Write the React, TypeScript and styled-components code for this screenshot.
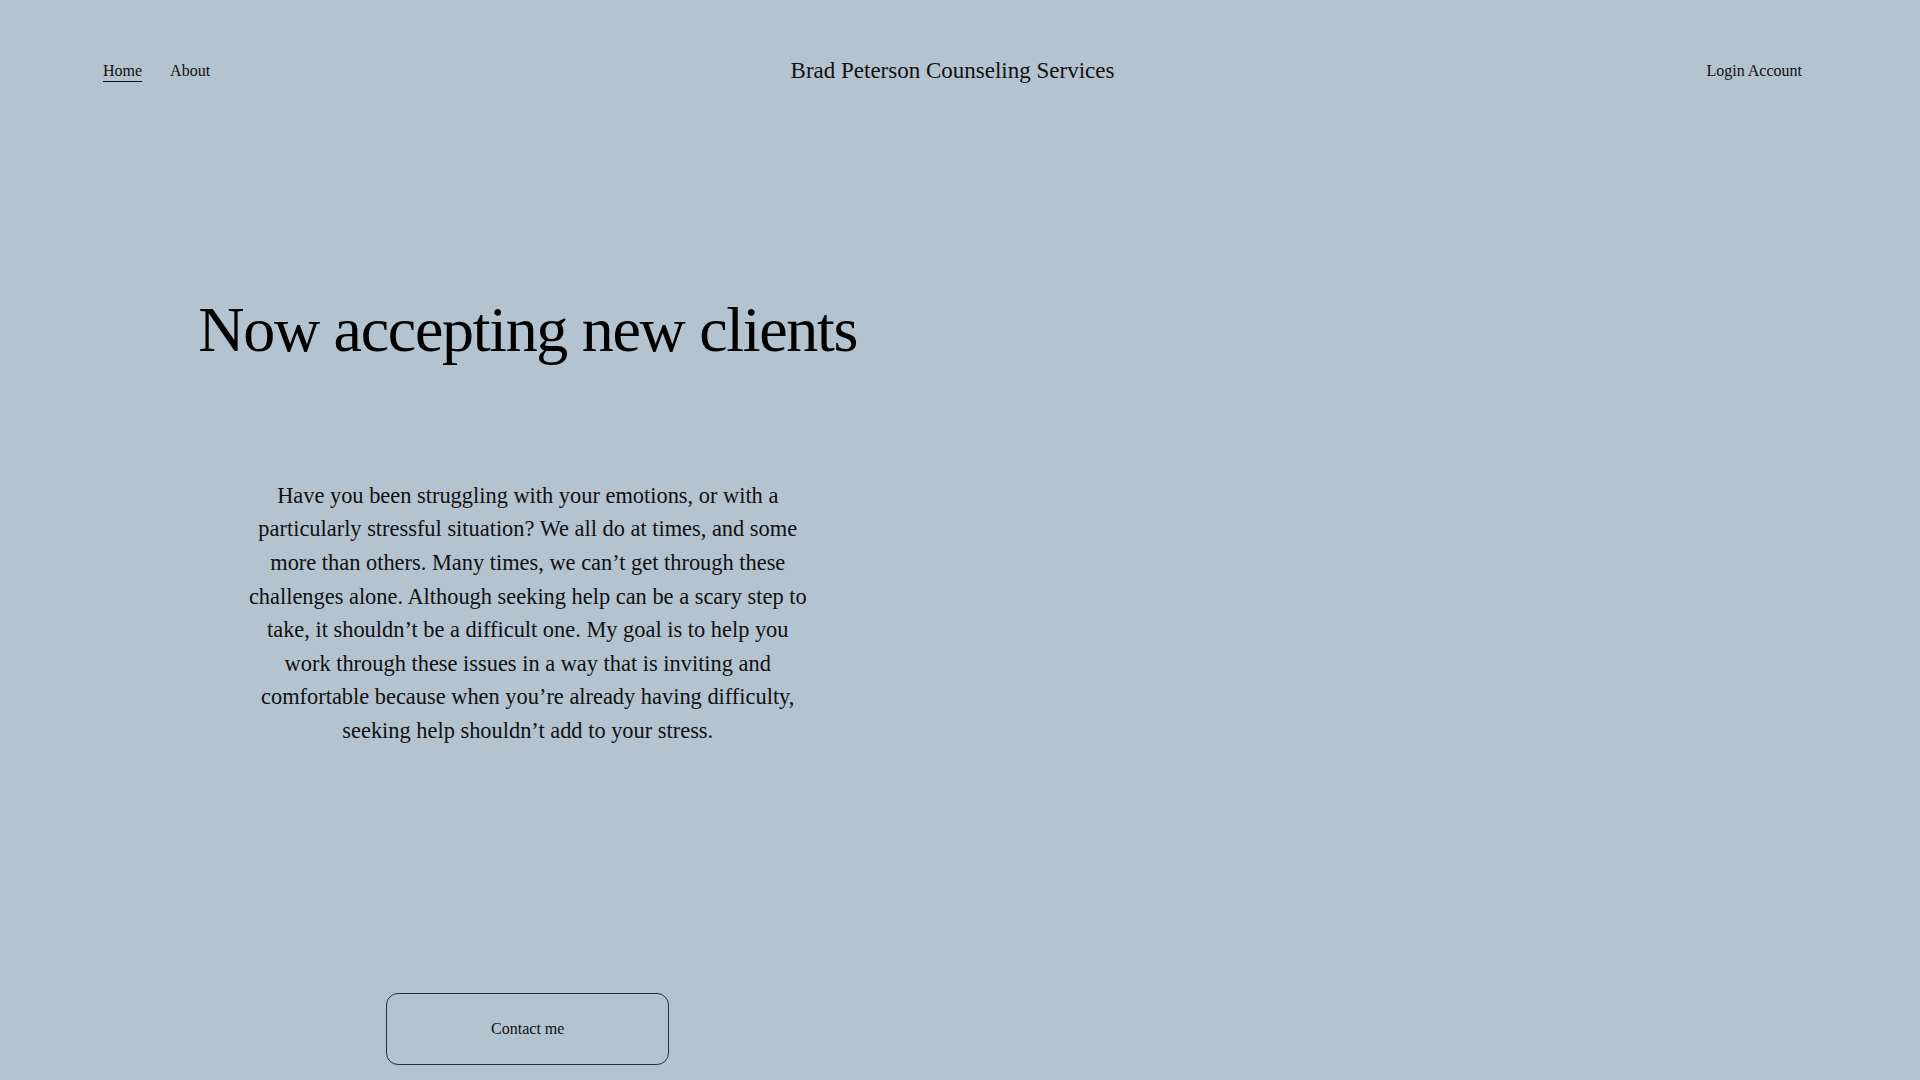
import React from "react";
import styled, { createGlobalStyle } from "styled-components";

const GlobalStyle = createGlobalStyle`
  html, body {
    margin: 0;
    padding: 0;
    background: #b3c3d0;
  }
  body {
    font-family: "Liberation Serif", "Times New Roman", serif;
    color: #111111;
  }
  * { box-sizing: border-box; }
`;

/* right padding reserves the 15px scrollbar gutter seen in the reference */
const Page = styled.div`
  min-height: 100vh;
  background: #b3c3d0;
  padding: 0 15px 60px 0;
`;

const Header = styled.header`
  display: grid;
  grid-template-columns: 1fr auto 1fr;
  align-items: center;
  height: 143px;
  padding: 0 103px;
`;

const NavGroup = styled.nav<{ $align?: "start" | "end" }>`
  display: flex;
  gap: 28px;
  justify-content: ${(p) => (p.$align === "end" ? "flex-end" : "flex-start")};
`;

const NavLink = styled.a<{ $active?: boolean }>`
  font-size: 16px;
  line-height: 1.4;
  color: #111111;
  text-decoration: ${(p) => (p.$active ? "underline" : "none")};
  text-decoration-thickness: 1px;
  text-underline-offset: 5px;
  cursor: pointer;
`;

const SiteTitle = styled.a`
  font-size: 23px;
  line-height: 1.4;
  color: #111111;
  text-decoration: none;
`;

const Main = styled.main`
  display: grid;
  grid-template-columns: 1fr 1fr;
  padding: 0 103px;
`;

const Column = styled.section`
  display: flex;
  flex-direction: column;
  align-items: center;
  padding-top: 149px;
`;

const Heading = styled.h1`
  margin: 0;
  font-size: 64px;
  font-weight: 400;
  line-height: 1.2;
  letter-spacing: -1.3px;
  text-align: center;
  color: #000000;
`;

const Lead = styled.p`
  margin: 110px 0 0;
  max-width: 566px;
  font-size: 22.4px;
  line-height: 1.5;
  text-align: center;
  color: #111111;
`;

const ContactButton = styled.a`
  margin-top: 245px;
  display: flex;
  align-items: center;
  justify-content: center;
  width: 283px;
  height: 72px;
  border: 1px solid #2a2f33;
  border-radius: 12px;
  font-size: 16px;
  color: #111111;
  text-decoration: none;
  cursor: pointer;
`;

export default function App() {
  return (
    <>
      <GlobalStyle />
      <Page>
        <Header>
          <NavGroup>
            <NavLink $active>Home</NavLink>
            <NavLink>About</NavLink>
          </NavGroup>
          <SiteTitle>Brad Peterson Counseling Services</SiteTitle>
          <NavGroup $align="end">
            <NavLink>Login Account</NavLink>
          </NavGroup>
        </Header>
        <Main>
          <Column>
            <Heading>Now accepting new clients</Heading>
            <Lead>
              Have you been struggling with your emotions, or with a
              particularly stressful situation? We all do at times, and some
              more than others. Many times, we can’t get through these
              challenges alone. Although seeking help can be a scary step to
              take, it shouldn’t be a difficult one. My goal is to help you
              work through these issues in a way that is inviting and
              comfortable because when you’re already having difficulty,
              seeking help shouldn’t add to your stress.
            </Lead>
            <ContactButton>Contact me</ContactButton>
          </Column>
          <Column />
        </Main>
      </Page>
    </>
  );
}
